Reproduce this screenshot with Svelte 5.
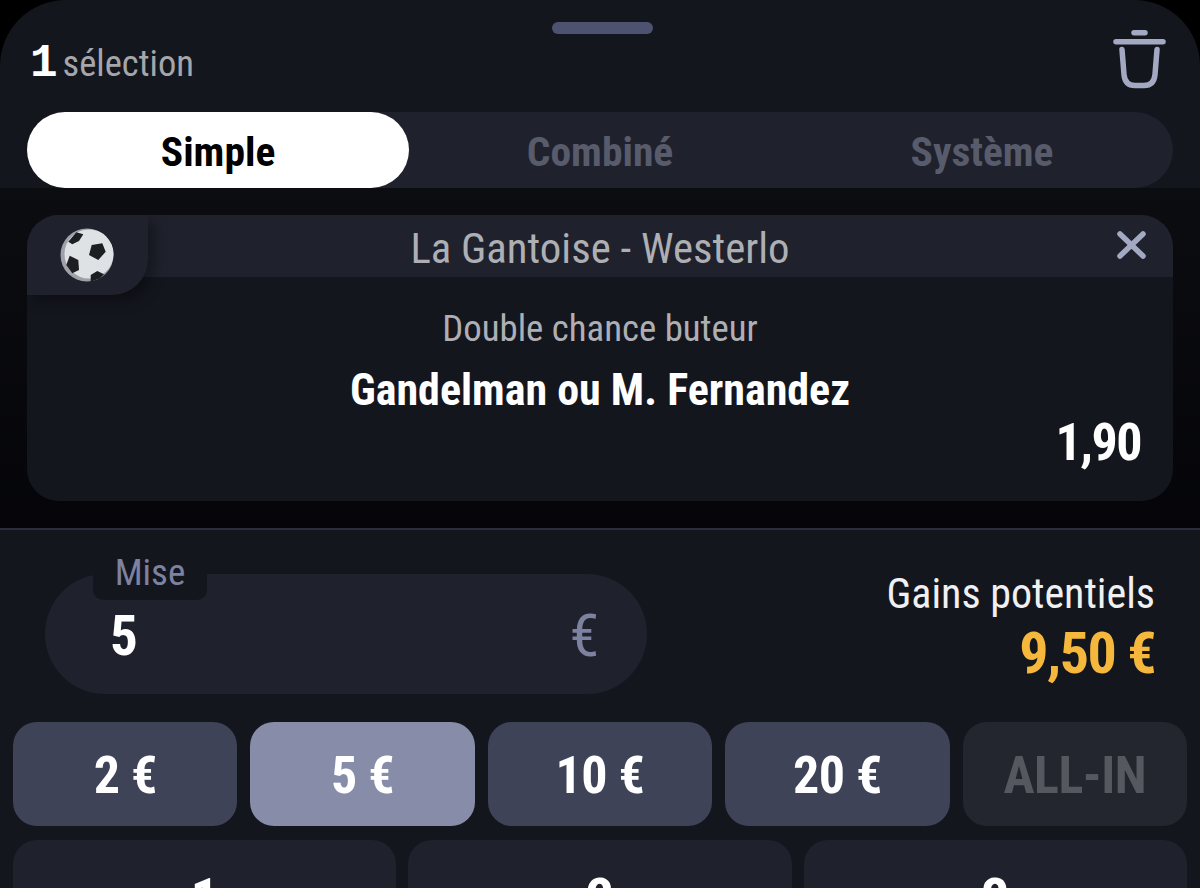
<script>
    const chips = [
        { label: '2 €' },
        { label: '5 €', active: true },
        { label: '10 €' },
        { label: '20 €' },
        { label: 'ALL-IN', off: true }
    ];
    const keys = ['1', '2', '3'];
    const tabs = ['Combiné', 'Système'];
</script>

<main class="page">
    <div class="sheet">
        <header class="top">
            <span class="handle"></span>
            <div class="title"><b>1</b><span>sélection</span></div>
            <svg class="trash" width="54" height="62" viewBox="0 0 54 62" fill="none" stroke="#a3a9c2" stroke-linecap="round" stroke-linejoin="round">
                <path d="M22 3.700h11" stroke-width="5.500" />
                <path d="M4 12.800h47" stroke-width="5.500" />
                <path d="M10 20.500l2 25q1 11 11 11h9q10 0 11-11l2-25" stroke-width="5.500" />
            </svg>
        </header>

        <nav class="tabs">
            <div class="tab on">Simple</div>
            {#each tabs as tab}
                <div class="tab">{tab}</div>
            {/each}
        </nav>

        <section class="slip">
            <article class="card">
                <div class="match">
                    <div class="sport">
                        <svg width="54" height="54" viewBox="0 0 54 54">
                            <circle cx="27" cy="27" r="26.500" fill="#9ea2a8" />
                            <circle cx="29" cy="26" r="24.500" fill="#dfe2e5" />
                            <path d="M8.300 13.700l8-9.400 7 2-4.300 6.700-6.700 3.300z" fill="#1d1e22" />
                            <path d="M31.700 17l10.600-1.700 3.400 8.400-7.400 8.300-9.300-5z" fill="#1d1e22" />
                            <path d="M9.700 27.700l8.600 4.300.7 10-6.700 3.300-6-8.300z" fill="#1d1e22" />
                            <path d="M30.700 47l6.600-4 6.700 3.300-4 4-9.300 3.400z" fill="#1d1e22" />
                        </svg>
                    </div>
                    <span>La Gantoise - Westerlo</span>
                    <svg class="close" width="29" height="28" viewBox="0 0 29 28" stroke="#a3a9c2" stroke-width="5.500" stroke-linecap="round">
                        <path d="M3 3l23 22M26 3L3 25" />
                    </svg>
                </div>
                <div class="bet">
                    <div class="market">Double chance buteur</div>
                    <div class="pick">Gandelman ou M. Fernandez</div>
                    <div class="odds">1,90</div>
                </div>
            </article>
        </section>

        <section class="stake">
            <div class="stake-row">
                <div class="field">
                    <span class="field-label">Mise</span>
                    <span class="amount">5</span>
                    <span class="currency">€</span>
                </div>
                <div class="gains">
                    <div class="gains-label">Gains potentiels</div>
                    <div class="gains-value">9,50 €</div>
                </div>
            </div>

            <div class="chips">
                {#each chips as chip}
                    <div class="chip" class:active={chip.active} class:off={chip.off}>{chip.label}</div>
                {/each}
            </div>

            <div class="keys">
                {#each keys as key}
                    <div class="key">{key}</div>
                {/each}
            </div>
        </section>
    </div>
</main>

<style>
    :global(body) {
        background: #000;
    }

    .page {
        height: 888px;
        overflow: hidden;
        background: #000;
        font-family: Roboto, "Liberation Sans", sans-serif;
        font-stretch: 75%;
        color: #fff;
    }

    .sheet {
        display: flex;
        flex-direction: column;
        border-radius: 66px 66px 0 0;
        overflow: hidden;
        background: #14161e;
    }

    .top {
        position: relative;
        height: 112px;
        display: flex;
        justify-content: space-between;
        padding: 29px 34px 0 30px;
        box-sizing: border-box;
    }

    .handle {
        position: absolute;
        top: 22px;
        left: 552px;
        width: 101px;
        height: 12px;
        border-radius: 6px;
        background: #4c5270;
    }

    .title {
        display: flex;
        align-items: baseline;
        gap: 10px;
        height: 68px;
        font-size: 36.500px;
        line-height: 70px;
        color: #a5a6ab;
    }

    .title b {
        font-family: "Liberation Mono", monospace;
        font-size: 46px;
        color: #fff;
        letter-spacing: -5px;
    }

    .tabs {
        display: grid;
        grid-template-columns: repeat(3, 1fr);
        height: 76px;
        margin: 0 27px;
        border-radius: 38px;
        background: #1f212c;
    }

    .tab {
        display: flex;
        align-items: center;
        justify-content: center;
        padding-top: 3px;
        box-sizing: border-box;
        border-radius: 38px;
        font-size: 41.500px;
        font-weight: 700;
        color: #585b6b;
    }

    .tab.on {
        background: #fff;
        color: #000;
    }

    .slip {
        background: linear-gradient(#0c0d11, #050509);
        padding: 27px;
    }

    .card {
        height: 286px;
        border-radius: 32px;
        overflow: hidden;
        background: #14161e;
    }

    .match {
        position: relative;
        height: 62px;
        display: flex;
        align-items: center;
        justify-content: center;
        padding-top: 3px;
        box-sizing: border-box;
        background: #1f212c;
        font-size: 42.800px;
        color: #aeafb4;
    }

    .sport {
        position: absolute;
        top: 0;
        left: 0;
        width: 121px;
        height: 80px;
        display: flex;
        align-items: center;
        justify-content: center;
        padding-right: 1px;
        box-sizing: border-box;
        border-radius: 0 0 36px 0;
        background: #1f212c;
        box-shadow: 6px 6px 14px rgba(0, 0, 0, 0.35);
    }

    .close {
        position: absolute;
        top: 16px;
        right: 27px;
    }

    .bet {
        position: relative;
        text-align: center;
        padding-top: 30px;
    }

    .market {
        font-size: 36.800px;
        line-height: 44px;
        color: #aeafb4;
    }

    .pick {
        margin-top: 17px;
        font-size: 44px;
        line-height: 44px;
        font-weight: 700;
    }

    .odds {
        margin: 3px 32px 0 0;
        text-align: right;
        font-size: 52px;
        line-height: 56px;
        font-weight: 700;
        letter-spacing: -1.500px;
    }

    .stake {
        border-top: 2px solid #2c2d3c;
        padding: 0 13px;
    }

    .stake-row {
        display: flex;
        justify-content: space-between;
        padding: 44px 32px 0 32px;
    }

    .field {
        position: relative;
        width: 602px;
        height: 120px;
        display: flex;
        align-items: center;
        justify-content: space-between;
        padding: 3px 48px 0 65px;
        box-sizing: border-box;
        border-radius: 60px;
        background: #1f212c;
    }

    .field-label {
        position: absolute;
        top: -26px;
        left: 48px;
        width: 114px;
        height: 52px;
        line-height: 50px;
        text-align: center;
        border-radius: 0 0 10px 10px;
        background: #14161e;
        font-size: 37px;
        color: #7c82a0;
    }

    .amount {
        font-size: 55px;
        font-weight: 700;
    }

    .currency {
        font-size: 60px;
        line-height: 60px;
        color: #7c82a0;
    }

    .gains {
        text-align: right;
        margin-top: -4px;
    }

    .gains-label {
        font-size: 42px;
        line-height: 48px;
        color: #f0f0f2;
    }

    .gains-value {
        margin-top: 4px;
        font-size: 58px;
        line-height: 62px;
        font-weight: 700;
        letter-spacing: -1.500px;
        color: #f5b83d;
    }

    .chips {
        display: grid;
        grid-template-columns: repeat(5, 1fr);
        gap: 13px;
        margin-top: 28px;
    }

    .chip {
        height: 104px;
        display: flex;
        align-items: center;
        justify-content: center;
        padding-top: 3px;
        box-sizing: border-box;
        border-radius: 24px;
        background: #3e4358;
        font-size: 52px;
        font-weight: 700;
        letter-spacing: -0.500px;
    }

    .chip.active {
        background: #878da9;
    }

    .chip.off {
        background: #24262f;
        color: #565860;
    }

    .keys {
        display: grid;
        grid-template-columns: repeat(3, 1fr);
        gap: 12px;
        margin-top: 14px;
    }

    .key {
        height: 104px;
        padding-top: 26px;
        box-sizing: border-box;
        border-radius: 24px;
        background: #1f212c;
        text-align: center;
        font-size: 56px;
        font-weight: 700;
    }
</style>
